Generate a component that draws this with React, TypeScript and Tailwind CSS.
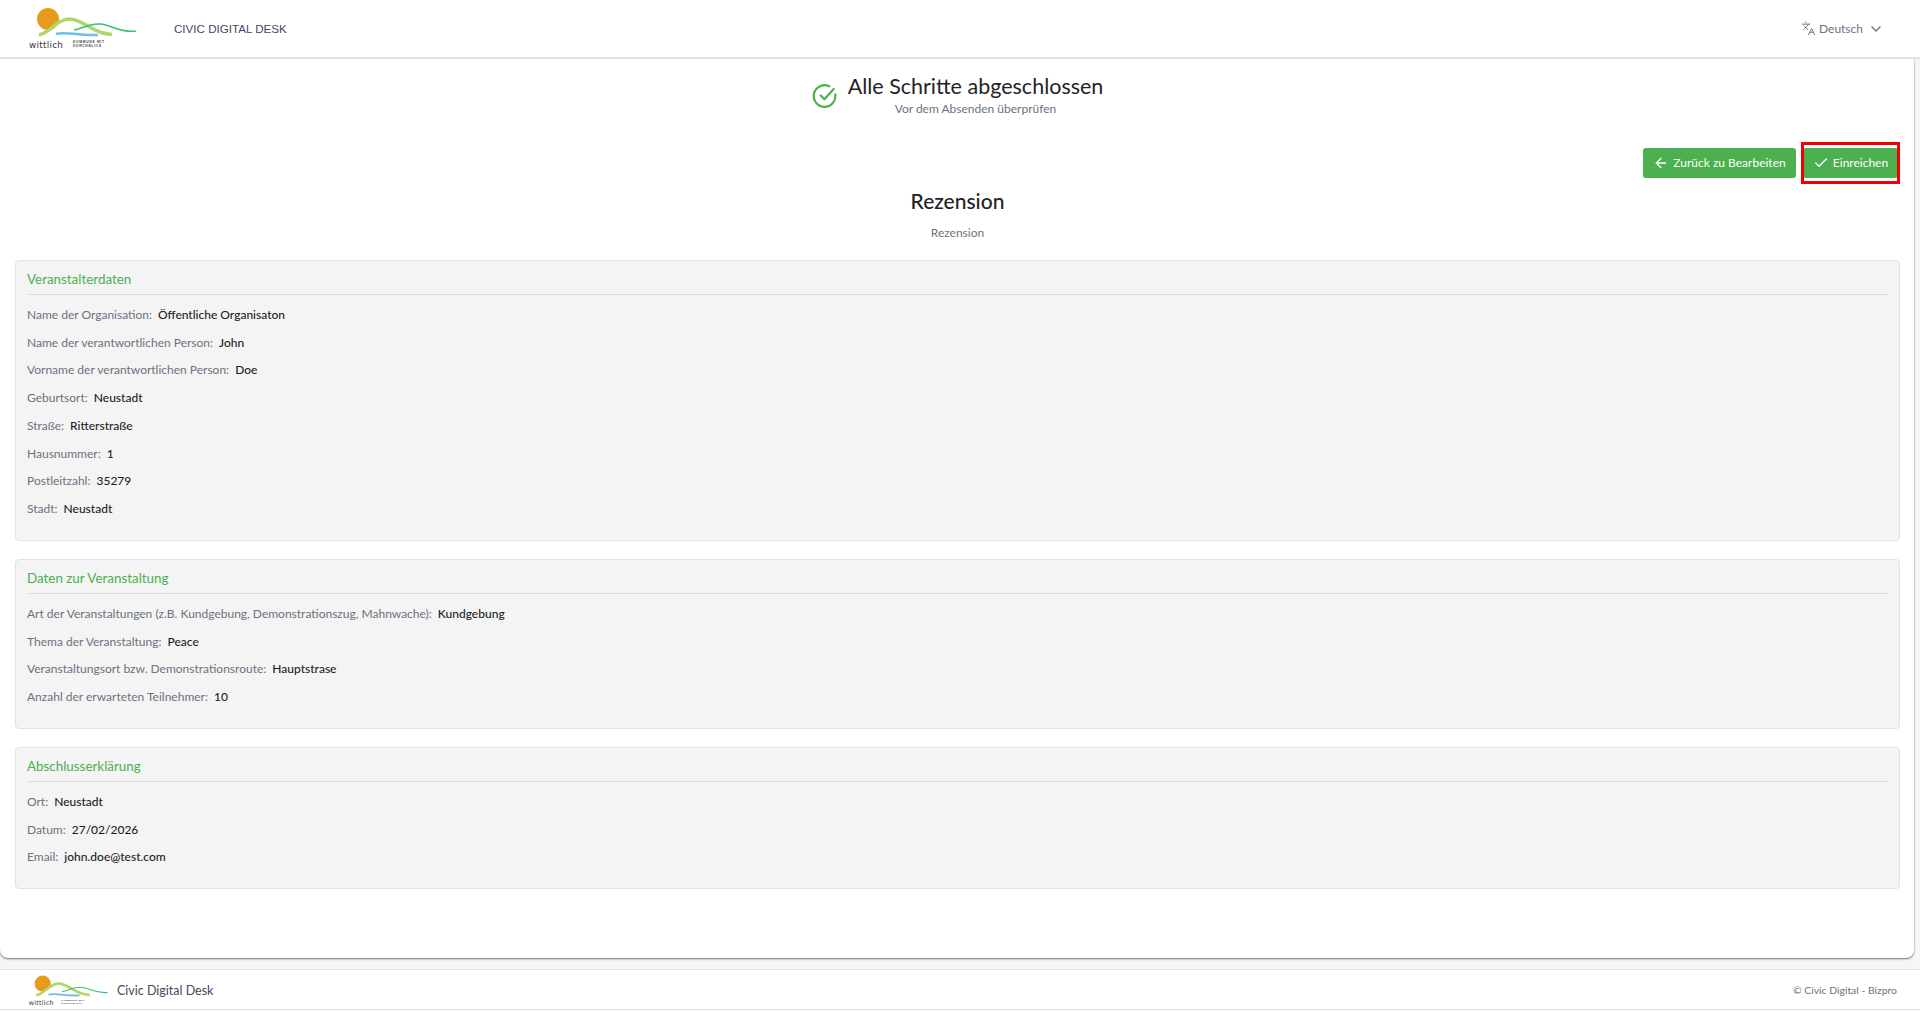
import { ArrowLeft, Check, ChevronDown, Languages } from "lucide-react";

const SECTIONS = [
  {
    title: "Veranstalterdaten",
    rows: [
      ["Name der Organisation:", "Öffentliche Organisaton"],
      ["Name der verantwortlichen Person:", "John"],
      ["Vorname der verantwortlichen Person:", "Doe"],
      ["Geburtsort:", "Neustadt"],
      ["Straße:", "Ritterstraße"],
      ["Hausnummer:", "1"],
      ["Postleitzahl:", "35279"],
      ["Stadt:", "Neustadt"],
    ],
  },
  {
    title: "Daten zur Veranstaltung",
    rows: [
      ["Art der Veranstaltungen (z.B. Kundgebung, Demonstrationszug, Mahnwache):", "Kundgebung"],
      ["Thema der Veranstaltung:", "Peace"],
      ["Veranstaltungsort bzw. Demonstrationsroute:", "Hauptstrase"],
      ["Anzahl der erwarteten Teilnehmer:", "10"],
    ],
  },
  {
    title: "Abschlusserklärung",
    rows: [
      ["Ort:", "Neustadt"],
      ["Datum:", "27/02/2026"],
      ["Email:", "john.doe@test.com"],
    ],
  },
];

function Logo({ className }: { className: string }) {
  return (
    <svg viewBox="0 0 110 42" className={className}>
      <circle cx="20" cy="11" r="11" fill="#e79a1d" />
      <path d="M11 27 C24 24 28 11 42 11 C52 11 60 20 72 24 C76 25.5 80 26 84 26.5" fill="none" stroke="#b0d667" strokeWidth="3.5" />
      <path d="M28 26 C38 23 48 28 70 27" fill="none" stroke="#6cbcec" strokeWidth="2.5" />
      <path d="M46 22 C56 20 62 15 72 16 C84 17 92 25 108 23" fill="none" stroke="#34c46c" strokeWidth="1.5" />
      <text x="1" y="39.5" fontFamily="'DejaVu Sans', sans-serif" fontSize="8.8" letterSpacing="0.3" fill="#333">wittlich</text>
      <text x="45" y="34.5" fontFamily="'Liberation Sans', sans-serif" fontWeight="bold" fontSize="3.3" letterSpacing="0.7" fill="#444">KOMMUNE MIT</text>
      <text x="45" y="39" fontFamily="'Liberation Sans', sans-serif" fontWeight="bold" fontSize="3.3" letterSpacing="0.7" fill="#444">DURCHBLICK</text>
    </svg>
  );
}

export default function App() {
  return (
    <div className="flex h-[1011px] flex-col overflow-hidden bg-[#f5f6f8] font-['Lato','Noto_Sans',sans-serif] text-[12px]">
      <header className="flex h-[59px] shrink-0 items-center border-b-2 border-[#e3e4e6] bg-white pl-[28px] pr-[36px]">
        <Logo className="h-[42px] w-[110px]" />
        <span className="ml-[36px] font-['Liberation_Sans',sans-serif] text-[11.6px] text-[#3f4a5c]">CIVIC DIGITAL DESK</span>
        <div className="ml-auto flex items-center text-[#6b7280]">
          <Languages className="h-[15px] w-[15px]" strokeWidth={1.5} />
          <span className="ml-[3px] text-[12px]">Deutsch</span>
          <ChevronDown className="ml-[5px] h-[16px] w-[16px]" strokeWidth={2} />
        </div>
      </header>

      <main className="mr-[6px] h-[899px] shrink-0 rounded-b-lg bg-white pl-[15px] pr-[14px] shadow-[0_1px_2px_rgba(0,0,0,0.55)]">
        <div className="flex h-[61px] items-start justify-center pt-[14px]">
          <svg viewBox="0 0 24 24" className="mr-[10px] mt-[10px] h-[26px] w-[26px]" fill="none" stroke="#4caf50" strokeWidth="2" strokeLinecap="round" strokeLinejoin="round">
            <path d="M21.5 10.5A10 10 0 1 1 16 3" />
            <path d="M8 11.5l3.5 3.5L20 5.5" />
          </svg>
          <div className="text-center">
            <div className="text-[21.5px] leading-[26px] text-[#1f2328]">Alle Schritte abgeschlossen</div>
            <div className="mt-[1px] text-[12px] leading-[18px] text-[#6b7280]">Vor dem Absenden überprüfen</div>
          </div>
        </div>

        <div className="mt-[28px] flex justify-end gap-[7px] pr-[2px] text-white">
          <button className="flex h-[30px] w-[153px] items-center justify-center gap-[4px] rounded-[3px] bg-[#4caf50]">
            <ArrowLeft className="h-[16px] w-[16px]" />
            Zurück zu Bearbeiten
          </button>
          <div className="relative">
            <button className="flex h-[30px] w-[95px] items-center justify-center gap-[4px] rounded-[3px] bg-[#4caf50]">
              <Check className="h-[16px] w-[16px]" />
              Einreichen
            </button>
            <div className="absolute -inset-x-[2px] -inset-y-[6px] border-[3px] border-[#f00000]" />
          </div>
        </div>

        <div className="mt-[10px] text-center text-[21px] font-medium leading-[26px] text-[#1f2328]">Rezension</div>
        <div className="mt-[9px] text-center text-[12px] leading-[20px] text-[#6b7280]">Rezension</div>

        <div className="mt-[17px] flex flex-col gap-[18px]">
          {SECTIONS.map((s) => (
            <section key={s.title} className="rounded-[4px] border border-[#e2e3e5] bg-[#f4f4f4] px-[11px] pb-[17px] pt-[8px]">
              <h3 className="border-b border-[#dcdde0] pb-[5px] text-[13.4px] leading-[20px] text-[#4caf50]">{s.title}</h3>
              <div className="mt-[6px]">
                {s.rows.map(([label, value]) => (
                  <div key={label} className="flex h-[27.75px] items-center gap-[6px]">
                    <span className="text-[#6b7280]">{label}</span>
                    <span className="font-medium text-[#1b1f24]">{value}</span>
                  </div>
                ))}
              </div>
            </section>
          ))}
        </div>
      </main>

      <footer className="mt-[11px] flex h-[41px] shrink-0 items-center border-y border-[#e3e4e6] bg-white pl-[28px] pr-[23px] pt-[3px]">
        <Logo className="h-[32px] w-[81px]" />
        <span className="ml-[8px] text-[12.5px] text-[#3f4a5c]">Civic Digital Desk</span>
        <span className="ml-auto text-[10.4px] text-[#6b7280]">© Civic Digital - Bizpro</span>
      </footer>
    </div>
  );
}
